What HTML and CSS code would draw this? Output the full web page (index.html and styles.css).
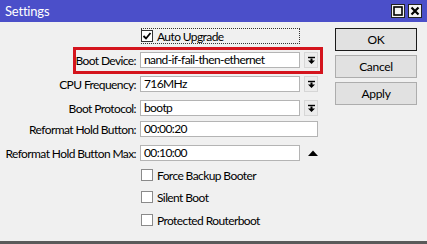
FILE: index.html
```html
<!DOCTYPE html>
<html lang="en">
<head>
  <meta charset="UTF-8" />
  <title>Settings</title>
  <link rel="stylesheet" href="styles.css">
</head>
<body>
  <div class="window">
    <div class="titlebar">
      <span class="title">Settings</span>
      <div class="title-buttons">
        <span class="tb-btn">
          <svg width="10" height="10" viewBox="0 0 10 10"><rect x="1" y="1" width="8" height="8" fill="none" stroke="#000" stroke-width="1.6"/></svg>
        </span>
        <span class="tb-btn">
          <svg width="10" height="10" viewBox="0 0 10 10"><path d="M1.5 1.5 L8.5 8.5 M8.5 1.5 L1.5 8.5" stroke="#000" stroke-width="2.2"/></svg>
        </span>
      </div>
    </div>

    <div class="content">
      <div class="form">
        <div class="row row-check">
          <span class="label"></span>
          <label class="check focused">
            <span class="box checked">
              <svg width="10" height="10" viewBox="0 0 10 10"><path d="M1.5 5 L4 7.5 L8.5 2" fill="none" stroke="#000" stroke-width="1.8"/></svg>
            </span>
            Auto Upgrade
          </label>
        </div>

        <div class="row highlighted">
          <span class="label">Boot Device:</span>
          <span class="field">nand-if-fail-then-ethernet</span>
          <span class="drop">
            <svg width="9" height="9" viewBox="0 0 9 9"><path d="M1 1.5 H8" stroke="#000" stroke-width="1.4"/><path d="M3.5 2.5 H5.5 V4.5 H8 L4.5 8 L1 4.5 H3.5 Z" fill="#000"/></svg>
          </span>
          <span class="red-box"></span>
        </div>

        <div class="row">
          <span class="label">CPU Frequency:</span>
          <span class="field">716MHz</span>
          <span class="drop">
            <svg width="9" height="9" viewBox="0 0 9 9"><path d="M1 1.5 H8" stroke="#000" stroke-width="1.4"/><path d="M3.5 2.5 H5.5 V4.5 H8 L4.5 8 L1 4.5 H3.5 Z" fill="#000"/></svg>
          </span>
        </div>

        <div class="row">
          <span class="label">Boot Protocol:</span>
          <span class="field">bootp</span>
          <span class="drop">
            <svg width="9" height="9" viewBox="0 0 9 9"><path d="M1 1.5 H8" stroke="#000" stroke-width="1.4"/><path d="M3.5 2.5 H5.5 V4.5 H8 L4.5 8 L1 4.5 H3.5 Z" fill="#000"/></svg>
          </span>
        </div>

        <div class="row row-tight">
          <span class="label">Reformat Hold Button:</span>
          <span class="field wide">00:00:20</span>
        </div>

        <div class="row">
          <span class="label">Reformat Hold Button Max:</span>
          <span class="field">00:10:00</span>
          <span class="up">
            <svg width="10" height="6" viewBox="0 0 10 6"><path d="M0 6 L5 0.5 L10 6 Z" fill="#000"/></svg>
          </span>
        </div>

        <div class="row row-check first-check">
          <span class="label"></span>
          <label class="check"><span class="box"></span>Force Backup Booter</label>
        </div>

        <div class="row row-check second-check">
          <span class="label"></span>
          <label class="check"><span class="box"></span>Silent Boot</label>
        </div>

        <div class="row row-check third-check">
          <span class="label"></span>
          <label class="check"><span class="box"></span>Protected Routerboot</label>
        </div>
      </div>

      <div class="actions">
        <button class="btn default">OK</button>
        <button class="btn">Cancel</button>
        <button class="btn">Apply</button>
      </div>
    </div>
  </div>
</body>
</html>
```

FILE: styles.css
```css
body {
  margin: 0;
  font-family: 'Lato', 'Noto Sans', sans-serif;
  font-size: 12px;
  letter-spacing: -0.6px;
  color: #000;
  background: #f0f0f0;
}

.window {
  width: 427px;
  height: 244px;
  box-sizing: border-box;
  background: #f0f0f0;
  border-bottom: 3px solid #5a5a5a;
  overflow: hidden;
}

.titlebar {
  height: 22px;
  background: #4b4fc9;
  display: flex;
  align-items: center;
  justify-content: space-between;
  padding: 0 5px;
}

.title {
  color: #fff;
  font-size: 13px;
  letter-spacing: -0.2px;
}

.title-buttons {
  display: flex;
  gap: 3px;
}

.tb-btn {
  width: 14px;
  height: 14px;
  box-sizing: border-box;
  background: #f4f4f4;
  border: 1px solid #222;
  display: flex;
  align-items: center;
  justify-content: center;
}

.content {
  display: flex;
  padding: 6px 0 0 0;
}

.form {
  width: 335px;
  display: flex;
  flex-direction: column;
  gap: 8px;
}

.row {
  display: flex;
  align-items: center;
  height: 16px;
  position: relative;
}

.row-tight {
  margin-top: -3px;
}

.first-check {
  margin-top: -2px;
}

.second-check {
  margin-top: -2px;
}

.third-check {
  margin-top: -1px;
}

.label {
  width: 136px;
  text-align: right;
  margin-right: 4px;
  white-space: nowrap;
}

.field {
  width: 160px;
  height: 16px;
  box-sizing: border-box;
  background: #fff;
  border: 1px solid #b4b4b4;
  padding-left: 3px;
  line-height: 14px;
  white-space: nowrap;
  overflow: hidden;
}

.field.wide {
  width: 178px;
}

.drop {
  width: 14px;
  height: 16px;
  box-sizing: border-box;
  margin-left: 4px;
  background: #ececec;
  border: 1px solid #d6d6d6;
  display: flex;
  align-items: center;
  justify-content: center;
}

.up {
  width: 14px;
  margin-left: 6px;
  display: flex;
  justify-content: center;
}

.red-box {
  position: absolute;
  left: 73px;
  top: -5px;
  width: 250px;
  height: 27px;
  box-sizing: border-box;
  border: 3px solid #d4141d;
}

.check {
  display: flex;
  align-items: center;
  gap: 4px;
  margin-left: 1px;
  height: 16px;
}

.check.focused {
  width: 159px;
  box-sizing: border-box;
  outline: 1px dotted #333;
  outline-offset: -1px;
  padding-left: 0;
}

.box {
  width: 12px;
  height: 12px;
  box-sizing: border-box;
  background: #fff;
  border: 1px solid #8a8a8a;
  display: flex;
  align-items: center;
  justify-content: center;
}

.box.checked {
  border-color: #333;
}

.actions {
  display: flex;
  flex-direction: column;
  gap: 4px;
  padding-top: 0;
}

.btn {
  width: 82px;
  height: 23px;
  font-family: inherit;
  font-size: 12px;
  letter-spacing: -0.3px;
  background: #e1e1e1;
  border: 1px solid #adadad;
  padding: 0;
  color: #000;
}

.btn.default {
  border: 1px solid #1a1a1a;
}
```
